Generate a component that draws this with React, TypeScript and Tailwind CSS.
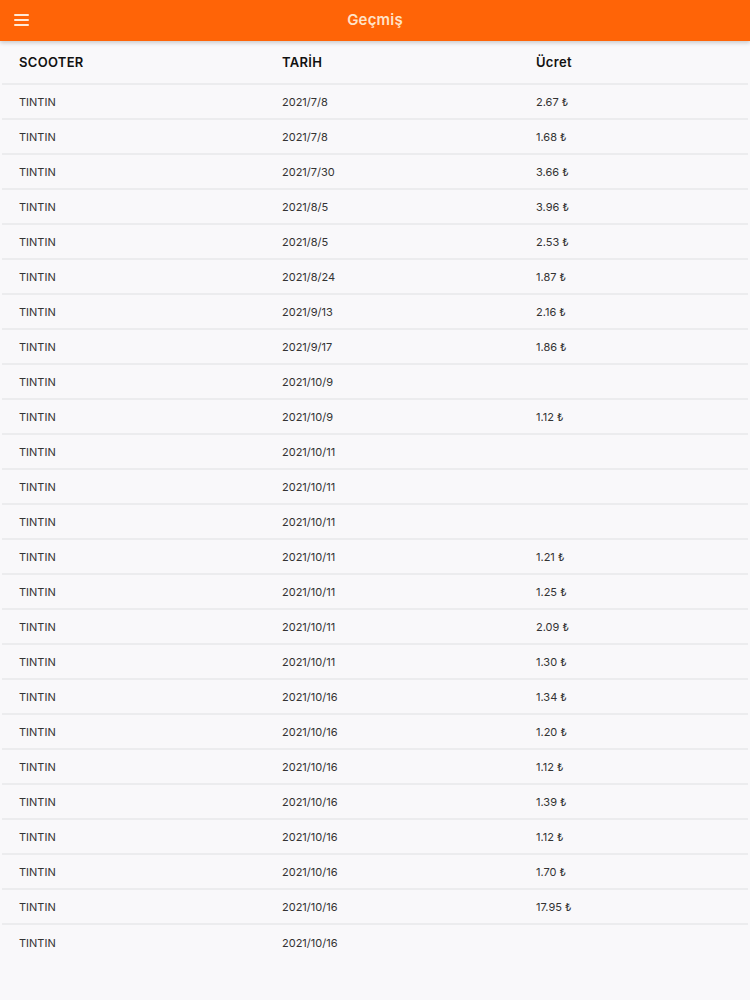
import React from 'react';

const rows: [string, string][] = [
  ['2021/7/8', '2.67'],
  ['2021/7/8', '1.68'],
  ['2021/7/30', '3.66'],
  ['2021/8/5', '3.96'],
  ['2021/8/5', '2.53'],
  ['2021/8/24', '1.87'],
  ['2021/9/13', '2.16'],
  ['2021/9/17', '1.86'],
  ['2021/10/9', ''],
  ['2021/10/9', '1.12'],
  ['2021/10/11', ''],
  ['2021/10/11', ''],
  ['2021/10/11', ''],
  ['2021/10/11', '1.21'],
  ['2021/10/11', '1.25'],
  ['2021/10/11', '2.09'],
  ['2021/10/11', '1.30'],
  ['2021/10/16', '1.34'],
  ['2021/10/16', '1.20'],
  ['2021/10/16', '1.12'],
  ['2021/10/16', '1.39'],
  ['2021/10/16', '1.12'],
  ['2021/10/16', '1.70'],
  ['2021/10/16', '17.95'],
  ['2021/10/16', ''],
];

const App: React.FC = () => {
  return (
    <div className="w-[750px] h-[1000px] bg-[#f9f8fa] font-['Inter','Liberation_Sans',sans-serif] overflow-hidden">
      {/* Üst bar */}
      <header className="relative z-10 h-[41px] bg-[#ff6407] flex items-center justify-center shadow-[0_2px_4px_rgba(0,0,0,0.18)]">
        <button className="absolute left-[14px] top-[14px] w-[15px] h-[12px] flex flex-col justify-between">
          <span className="block h-[2px] w-full bg-[#ffe9d6] rounded"></span>
          <span className="block h-[2px] w-full bg-[#ffe9d6] rounded"></span>
          <span className="block h-[2px] w-full bg-[#ffe9d6] rounded"></span>
        </button>
        <h1 className="text-[15px] font-semibold text-[#ffe3c8] tracking-[0.2px]">Geçmiş</h1>
      </header>

      {/* Tablo */}
      <div className="mx-[2px]">
        <div className="h-[44px] pt-[2px] flex items-center border-b-2 border-[#ececee] text-[13px] font-semibold text-[#111] tracking-[0.3px]">
          <div className="w-[280px] pl-[17px]">SCOOTER</div>
          <div className="w-[254px]">TARİH</div>
          <div className="flex-1">Ücret</div>
        </div>
        {rows.map(([date, fee], i) => (
          <div
            key={i}
            className={
              i < rows.length - 1
                ? 'h-[35px] pt-[2px] flex items-center border-b-2 border-[#ececee] text-[11px] text-[#333]'
                : 'h-[35px] pt-[2px] flex items-center text-[11px] text-[#333]'
            }
          >
            <div className="w-[280px] pl-[17px]">TINTIN</div>
            <div className="w-[254px]">{date}</div>
            <div className="flex-1">{fee ? `${fee} ₺` : ''}</div>
          </div>
        ))}
      </div>
    </div>
  );
};

export default App;
